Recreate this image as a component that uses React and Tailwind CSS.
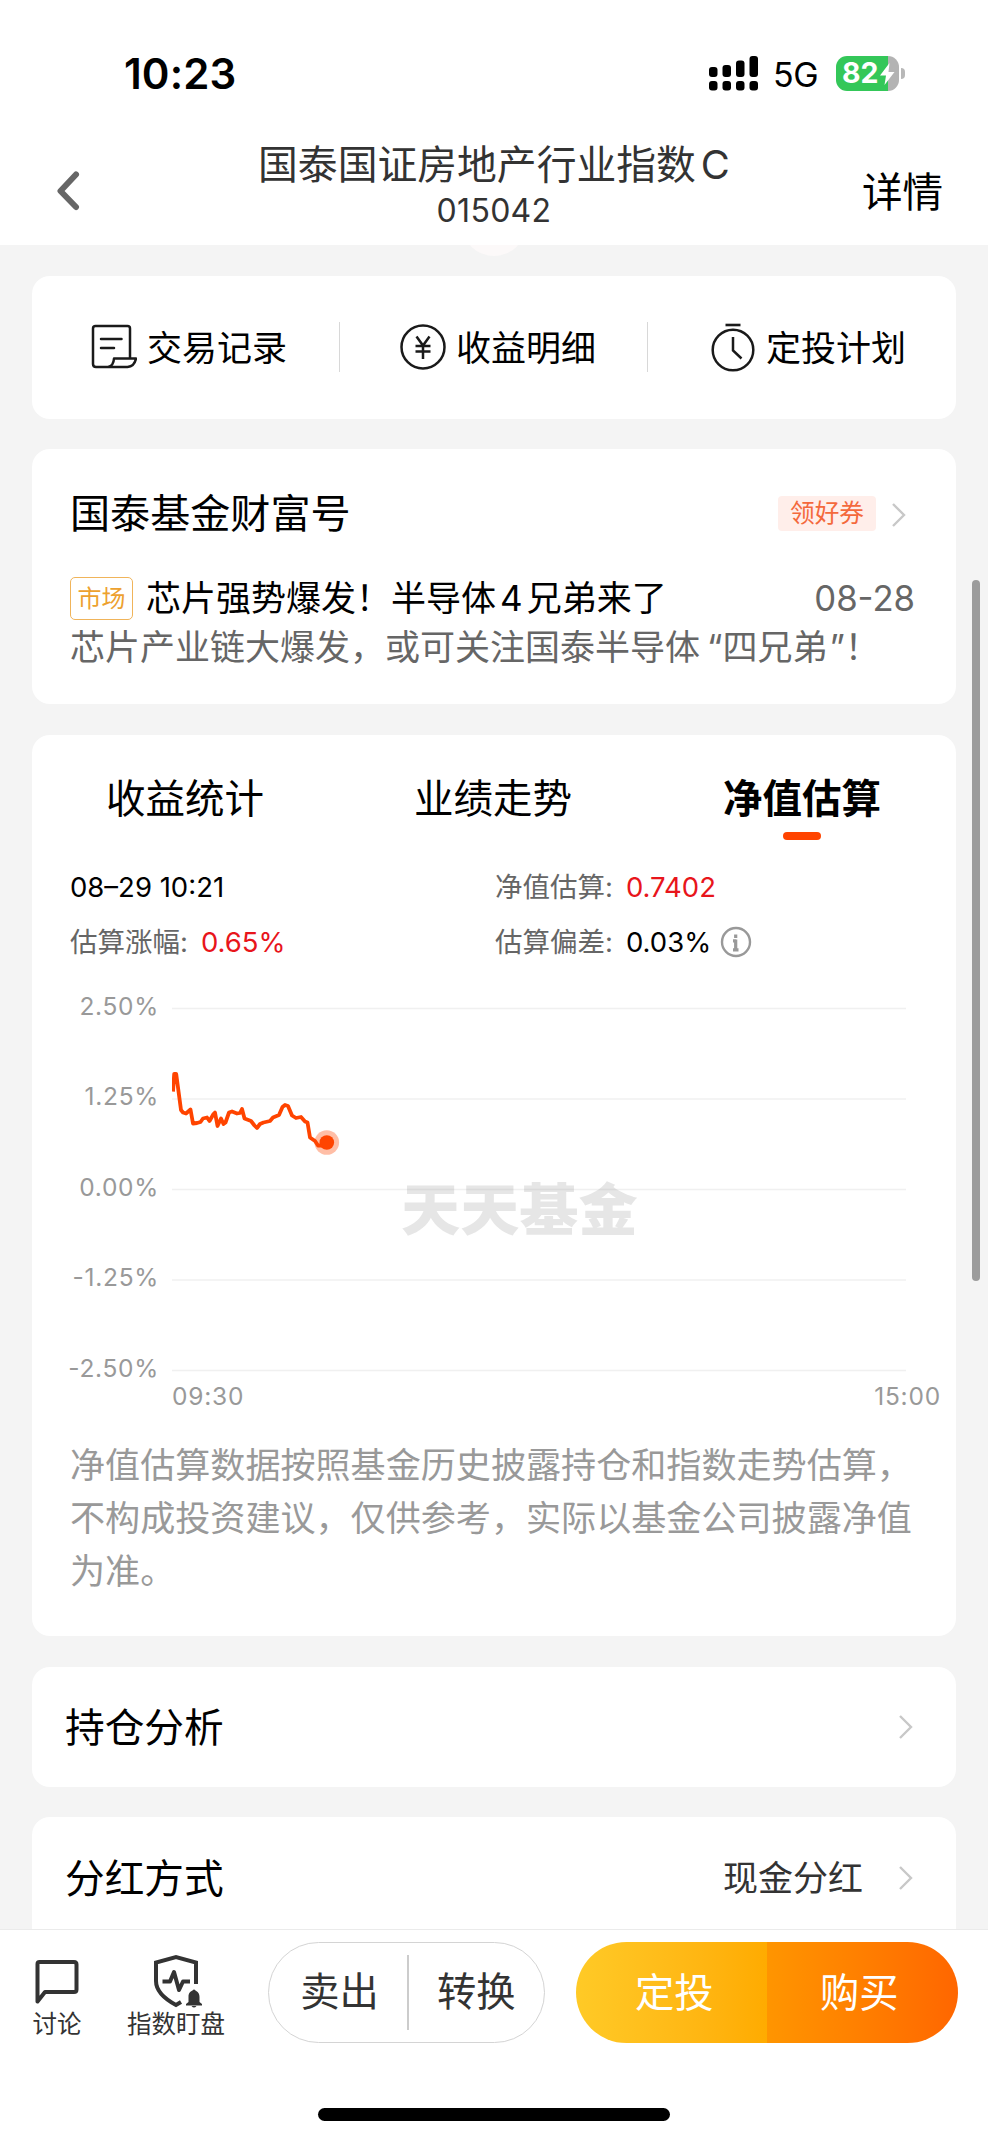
import React, { useState } from 'react';

const QUICK_LINKS = [
  { id: 'records', name: '交易记录', icon: RecordIcon },
  { id: 'income', name: '收益明细', icon: YenIcon },
  { id: 'plan', name: '定投计划', icon: TimerIcon }
];

const TABS = [
  { id: 'stats', name: '收益统计' },
  { id: 'trend', name: '业绩走势' },
  { id: 'estimate', name: '净值估算' }
];

const Y_LABELS = ['2.50%', '1.25%', '0.00%', '-1.25%', '-2.50%'];

// intraday estimate, in the plot's own coordinates
const LINE =
  'M1 83.5 L2.2 66 H4.2 L9 102 L11 104.5 L14 105.5 L18.5 101.5 L21 115.5 L25 115 L28.5 114 L31 110.5 L35 109.5 L37.5 113 L41.5 106 L43 104.5 L45.5 118 L49 110.5 L51.5 116 L53.5 114.5 L57 104.5 L60 103.5 L65 105.5 L68 105 L70 101 L72.5 110.5 L79 113 L82.5 117.5 L85 120 L88 116 L91.5 114.5 L98 113 L101 109.5 L107 107 L110.5 99 L113 97 L116 98 L120 107.5 L124 110 L129 109 L133 113.5 L135.5 114.5 L138 129.5 L143 133 L146 137.5 H152';

function RecordIcon() {
  return (
    <svg width="46" height="46" viewBox="0 0 46 46" fill="none" stroke="#1a1a1a" strokeWidth="2.5" strokeLinejoin="round" strokeLinecap="round">
      <path d="M39 34V4.5Q39 2 36.500 2H4.500Q2 2 2 4.500V40Q2 43 5 43H36.500Q43.500 42.500 45 34.500H23Q22.500 42 17 43" />
      <path d="M10 15H30.500M10 24H23" />
    </svg>
  );
}

function YenIcon() {
  return (
    <svg width="46" height="46" viewBox="0 0 46 46" fill="none" stroke="#1a1a1a" strokeWidth="2.5">
      <circle cx="23" cy="23" r="21.500" />
      <path d="M16.500 12.500L23 21.500L29.500 12.500M15.500 22H30.500M15.500 27.500H30.500M23 21.500V35" />
    </svg>
  );
}

function TimerIcon() {
  return (
    <svg width="44" height="50" viewBox="0 0 44 50" fill="none" stroke="#1a1a1a" strokeWidth="2.5">
      <circle cx="22" cy="28" r="20.300" />
      <path d="M14.500 3H29.500" strokeWidth="2.600" />
      <path d="M22 15V28.500L30.500 36.500" />
    </svg>
  );
}

function Chevron() {
  return (
    <svg width="14" height="24" viewBox="0 0 14 24" fill="none" stroke="#c8c8c8" strokeWidth="2.4">
      <path d="M1 1L12 12L1 23" />
    </svg>
  );
}

function StatusBar() {
  const bars = [
    { x: 0, y: 11, h: 10 },
    { x: 13.5, y: 9, h: 12 },
    { x: 27, y: 4.5, h: 16.5 },
    { x: 40.5, y: 0, h: 21 }
  ];

  return (
    <div className="flex h-[112px] items-start pl-[124px]">
      <div className="mt-[48px] w-[585px] text-[42px] leading-[52px] font-semibold tracking-[0.1px]">10:23</div>
      <svg className="mt-[56px]" width="49" height="35" viewBox="0 0 49 35">
        {bars.map((b) => (
          <g key={b.x}>
            <rect x={b.x} y={b.y} width="8.5" height={b.h} rx="3" />
            <rect x={b.x} y="25" width="8.5" height="9.5" rx="3" />
          </g>
        ))}
      </svg>
      <div className="mt-[54px] ml-[15px] w-[63px] text-[34px] leading-[42px] tracking-[-0.3px]">5G</div>
      <div className="relative mt-[56px] flex h-[35px] w-[63px] items-center overflow-hidden rounded-[11px] bg-linear-to-r from-[#34c759] from-[83%] to-[#b3b3b3] to-[83%] pl-[6px] text-[28.5px] font-bold text-white">
        82
        <svg className="absolute top-[7px] left-[44px]" width="15" height="22" viewBox="0 0 15 22" fill="#fff">
          <path d="M9.500 0L0 12.500H6L4.500 22L14.500 9H8.500Z" />
        </svg>
      </div>
      <div className="mt-[68px] ml-[2px] h-[11px] w-[4px] rounded-r-full bg-[#b8b8b8]" />
    </div>
  );
}

function Header() {
  return (
    <div className="flex h-[133px] items-start">
      <svg className="mt-[59px] ml-[56px]" width="24" height="40" viewBox="0 0 24 40" fill="none" stroke="#666" strokeWidth="6" strokeLinecap="round" strokeLinejoin="round">
        <path d="M20 3.500L4.500 20L20 36" />
      </svg>
      <div className="ml-[164px] w-[500px] text-center text-[#333]">
        <div className="mt-[29px] text-[39.8px] leading-[48px] whitespace-nowrap">
          国泰国证房地产行业指数<span className="ml-[5px]">C</span>
        </div>
        <div className="mt-[2px] text-[32px] leading-[40px] tracking-[0.3px]">015042</div>
      </div>
      <div className="mt-[57px] ml-[118px] text-[40.600px] leading-[48px] whitespace-nowrap">详情</div>
    </div>
  );
}

function QuickLinks() {
  return (
    <div className="grid h-[143px] grid-cols-3 rounded-[18px] bg-white">
      {QUICK_LINKS.map((link, i) => {
        const Icon = link.icon;
        return (
          <div key={link.id} className={`flex h-[142px] items-center ${i === 2 ? 'pl-[62px]' : i === 1 ? 'pl-[60px]' : 'pl-[59px]'}`}>
            <div className="flex w-[46px] justify-center">
              <Icon />
            </div>
            <span className="mt-[1px] ml-[10px] w-[141px] text-[35px] leading-[44px] whitespace-nowrap">{link.name}</span>
            {i < 2 && <div className="ml-auto h-[50px] w-[1.5px] bg-[#d8d8d8]" />}
          </div>
        );
      })}
    </div>
  );
}

function WealthCard() {
  return (
    <div className="mt-[30px] h-[255px] rounded-[18px] bg-white pt-[40px] pr-[42px] pl-[38px]">
      <div className="flex h-[48px] items-center">
        <h2 className="mt-[1px] text-[40.1px] leading-[48px]">国泰基金财富号</h2>
        <div className="ml-auto flex h-[35px] w-[98px] items-center justify-center rounded-[4px] bg-[#ffeeea] pt-[2px] text-[24.7px] text-[#f4693c]">领好券</div>
        <div className="mt-[4px] ml-[16px] w-[22px]">
          <Chevron />
        </div>
      </div>
      <div className="mt-[38px] flex h-[46px] items-center">
        <div className="flex h-[43px] w-[63px] items-center justify-center rounded-[5px] border-[1.5px] border-[#f0b45a] pt-[2px] text-[24px] text-[#eda12f]">市场</div>
        <div className="ml-[13px] text-[35px] leading-[44px]">
          芯片强势爆发！半导体<span className="mx-[4px]">4</span>兄弟来了
        </div>
        <div className="mr-[-1px] ml-auto text-[34.7px] leading-[44px] text-[#666]">08-28</div>
      </div>
      <div className="mt-[4px] text-[35px] leading-[44px] whitespace-nowrap text-[#666]">
        芯片产业链大爆发，或可关注国泰半导体<span className="ml-[7px]">“四兄弟</span><span className="ml-[2px]">”！</span>
      </div>
    </div>
  );
}

function EstimateChart() {
  return (
    <div className="relative mt-[30px] h-[430px]">
      <div className="flex h-[400px]">
        <div className="w-[126px] text-right text-[24.5px] tracking-[0.7px] text-[#999]">
          {Y_LABELS.map((label) => (
            <div key={label} className="mr-[-1px] h-[90.4px] leading-[32px]">{label}</div>
          ))}
        </div>
        <svg className="ml-[14px]" width="740" height="400" viewBox="0 0 740 400" fill="none">
          {[18.5, 109, 199.5, 290, 380.5].map((y) => (
            <path key={y} d={`M0 ${y}H734`} stroke="#f0f0f0" strokeWidth="1.6" />
          ))}
          <g transform="translate(0 18)">
            <path d={LINE} stroke="#ff4400" strokeWidth="3.8" strokeLinejoin="round" />
            <circle cx="154.8" cy="134.5" r="12.3" fill="#ff4400" fillOpacity="0.35" />
            <circle cx="154.8" cy="134.5" r="7.3" fill="#ff4400" />
          </g>
        </svg>
      </div>
      <div className="absolute top-[188px] left-[369px] scale-y-[0.95] text-[59.2px] leading-[64px] font-black whitespace-nowrap text-[#808080]/20">天天基金</div>
      <div className="mt-[-10px] flex justify-between pr-[15px] pl-[140px] text-[24.5px] leading-[32px] tracking-[0.8px] text-[#999]">
        <span>09:30</span>
        <span>15:00</span>
      </div>
    </div>
  );
}

function EstimateCard() {
  const [activeTab, setActiveTab] = useState('estimate');

  return (
    <div className="mt-[31px] h-[901px] rounded-[18px] bg-white pt-[40px]">
      <div className="grid h-[65px] grid-cols-3">
        {TABS.map((tab) => (
          <button key={tab.id} onClick={() => setActiveTab(tab.id)} className="flex flex-col items-center">
            <span className={`text-[39.5px] leading-[48px] ${activeTab === tab.id ? 'font-bold' : 'pr-[2px]'}`}>{tab.name}</span>
            {activeTab === tab.id && <span className="mt-[9px] h-[7.5px] w-[38px] rounded-full bg-[#ff4400]" />}
          </button>
        ))}
      </div>

      <div className="grid grid-cols-[425px_1fr] gap-y-[19px] pt-[29px] pl-[38px] text-[27.5px] leading-[36px] text-[#666]">
        <div className="text-black">08–29 10:21</div>
        <div className="flex">
          净值估算:<span className="ml-[13px] text-[#e8151b]">0.7402</span>
        </div>
        <div className="flex">
          估算涨幅:<span className="ml-[13px] text-[#e8151b]">0.65%</span>
        </div>
        <div className="flex items-center">
          估算偏差:<span className="ml-[13px] text-black">0.03%</span>
          <svg className="ml-[9px]" width="32" height="32" viewBox="0 0 32 32" fill="none" stroke="#999">
            <circle cx="16" cy="16" r="14" strokeWidth="2.4" />
            <path d="M15.700 8.500V12M13 14.800H16M15.700 13.500V24M13 23.800H18.500" strokeWidth="3.200" />
          </svg>
        </div>
      </div>

      <EstimateChart />

      <p className="mt-[19px] pl-[38px] text-[35.1px] leading-[52.8px] whitespace-nowrap text-[#999]">
        净值估算数据按照基金历史披露持仓和指数走势估算，
        <br />
        不构成投资建议，仅供参考，实际以基金公司披露净值
        <br />
        为准。
      </p>
    </div>
  );
}

function FooterBar() {
  return (
    <div className="h-[212px] shrink-0 border-t-[1.5px] border-[#ebebeb] bg-white">
      <div className="flex h-[127px] items-start pt-[12px] text-[#333]">
        <div className="ml-[20px] flex w-[74px] flex-col items-center pt-[16px] text-[24.5px] leading-[32px]">
          <svg width="46" height="48" viewBox="0 0 46 48" fill="none" stroke="#333" strokeWidth="4" strokeLinejoin="round">
            <path d="M3.500 43.500V6Q3.500 4 5.500 4H40Q42.500 4 42.500 6.500V31.500Q42.500 34 40 34H11Z" />
          </svg>
          <span className="mt-[2px]">讨论</span>
        </div>
        <div className="ml-[32px] flex w-[100px] flex-col items-center pt-[12px] text-[24.5px] leading-[32px]">
          <svg className="ml-[3px]" width="52" height="54" viewBox="0 0 52 54" fill="none" stroke="#333" strokeWidth="4">
            <path d="M44 30V8.500L24 3L4 8.500V27C4 37 11 44 24 51L29 48" />
            <path d="M10.500 27.500H18L22 18L27 36L31 27.500H38" strokeLinejoin="round" />
            <path d="M34 51.500H50V50L47.500 48V43C47.500 39 45.500 37.500 43.500 36.500Q42 34.500 40.500 36.500C38 37.500 36.500 39 36.500 43V48L34 50ZM39.500 52H44.500Q42 55 39.500 52Z" fill="#333" stroke="none" />
          </svg>
          <span className="whitespace-nowrap">指数盯盘</span>
        </div>
        <div className="ml-[42px] flex h-[101px] w-[277px] items-center rounded-full border-[1.5px] border-[#d4d4d4] text-[39.3px]">
          <span className="flex-1 pl-[3px] text-center">卖出</span>
          <span className="h-[75px] w-[1.5px] bg-[#ccc]" />
          <span className="flex-1 text-center">转换</span>
        </div>
        <div className="ml-[31px] flex h-[101px] w-[382px] overflow-hidden rounded-full text-[39.3px] leading-[101px] text-white">
          <span className="w-[191px] bg-linear-to-r from-[#ffca26] to-[#ffab00] pl-[59px]">定投</span>
          <span className="w-[191px] bg-linear-to-r from-[#ff9500] to-[#ff6600] pl-[53px]">购买</span>
        </div>
      </div>
      <div className="mx-auto mt-[51px] h-[13px] w-[352px] rounded-full bg-black" />
    </div>
  );
}

export default function App() {
  return (
    <div className="relative flex h-[2141px] w-[988px] flex-col overflow-hidden bg-[#f4f4f4] font-['Inter','Noto_Sans_CJK_SC',sans-serif] text-black">
      <div className="absolute top-[192px] left-[462px] size-[64px] rounded-full bg-[#fcf9f9]" />
      <div className="relative h-[245px] shrink-0 bg-white">
        <StatusBar />
        <Header />
      </div>

      <div className="h-[1684px] overflow-hidden px-8 pt-[31px]">
        <QuickLinks />
        <WealthCard />
        <EstimateCard />
        <div className="mt-[31px] flex h-[120px] items-center justify-between rounded-[18px] bg-white pr-[43px] pl-[33px] text-[39.7px]">
          <span className="pt-[4px]">持仓分析</span>
          <Chevron />
        </div>
        <div className="mt-[30px] flex h-[122px] items-center rounded-t-[18px] bg-white pr-[43px] pl-[33px] text-[39.7px]">
          <span className="pt-[4px]">分红方式</span>
          <span className="mr-[36px] ml-auto pt-[1px] text-[35px] text-[#333]">现金分红</span>
          <Chevron />
        </div>
      </div>

      <FooterBar />

      {/* Scroll thumb */}
      <div className="absolute top-[580px] right-[8px] h-[701px] w-[8px] rounded-full bg-[#9c9c9c]" />
    </div>
  );
}
